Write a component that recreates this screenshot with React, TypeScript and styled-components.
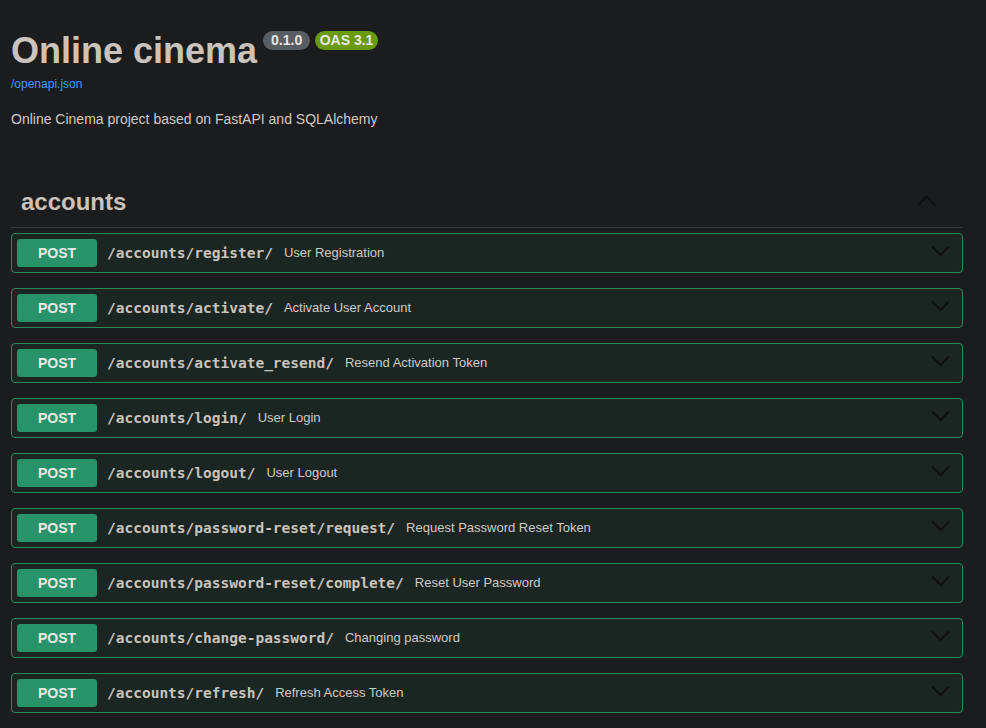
import React from 'react'
import styled, { createGlobalStyle } from 'styled-components'

const GlobalStyle = createGlobalStyle`
  html, body {
    margin: 0;
    padding: 0;
    background: #1b1c1e;
  }
  body {
    font-family: 'Liberation Sans', Arial, sans-serif;
    color: #cdc8c1;
  }
`

const Page = styled.div`
  padding: 30px 23px 0 11px;
`

const Info = styled.div`
  margin-bottom: 50px;
`

const TitleRow = styled.div`
  display: flex;
  align-items: flex-start;
`

const Title = styled.h2`
  margin: 0;
  font-size: 36px;
  line-height: 42px;
  font-weight: 700;
  color: #c9c3bb;
`

const Badges = styled.div`
  display: flex;
  gap: 5px;
  margin: 1px 0 0 6px;
`

const Badge = styled.span<{ $bg: string; $pad: number }>`
  display: inline-block;
  height: 19px;
  line-height: 19px;
  padding: 0 ${({ $pad }) => $pad}px;
  border-radius: 10px;
  background: ${({ $bg }) => $bg};
  color: #eae8e4;
  font-size: 14px;
  font-weight: 700;
`

const SpecLink = styled.a`
  display: block;
  margin-top: 5px;
  font-size: 12px;
  color: #3d9bff;
  text-decoration: none;
`

const Description = styled.p`
  margin: 20px 0 0;
  font-size: 14px;
  color: #cfcac3;
`

const TagHeader = styled.div`
  display: flex;
  align-items: center;
  justify-content: space-between;
  height: 30px;
  padding: 10px 26px 10px 10px;
  border-bottom: 1px solid #35383a;
  margin-bottom: 5px;
`

const TagName = styled.h3`
  margin: 0;
  font-size: 24px;
  font-weight: 700;
  color: #c9c3bb;
`

const OpBlock = styled.div`
  display: flex;
  align-items: center;
  padding: 5px;
  margin-bottom: 15px;
  border: 1px solid #2b8a5d;
  border-radius: 4px;
  background: #1b2623;
`

const Method = styled.span`
  width: 80px;
  height: 28px;
  line-height: 28px;
  flex-shrink: 0;
  text-align: center;
  border-radius: 3px;
  background: #28926a;
  color: #ebe9e5;
  font-size: 14px;
  font-weight: 700;
`

const Path = styled.span`
  padding: 0 11px 0 10px;
  font-family: 'DejaVu Sans Mono', 'Liberation Mono', monospace;
  font-size: 14.5px;
  font-weight: 700;
  color: #c8c3bc;
`

const Summary = styled.span`
  flex: 1;
  margin-top: -2px;
  font-size: 13px;
  color: #cfcac3;
`

const Arrow = styled.svg<{ $right: number }>`
  width: 20px;
  height: 20px;
  flex-shrink: 0;
  margin-right: ${({ $right }) => $right}px;
`

const ops = [
  ['/accounts/register/', 'User Registration'],
  ['/accounts/activate/', 'Activate User Account'],
  ['/accounts/activate_resend/', 'Resend Activation Token'],
  ['/accounts/login/', 'User Login'],
  ['/accounts/logout/', 'User Logout'],
  ['/accounts/password-reset/request/', 'Request Password Reset Token'],
  ['/accounts/password-reset/complete/', 'Reset User Password'],
  ['/accounts/change-password/', 'Changing password'],
  ['/accounts/refresh/', 'Refresh Access Token'],
]

export default function App() {
  return (
    <>
      <GlobalStyle />
      <Page>
        <Info>
          <TitleRow>
            <Title>Online cinema</Title>
            <Badges>
              <Badge $bg="#575d62" $pad={8}>0.1.0</Badge>
              <Badge $bg="#6a9a0e" $pad={4.5}>OAS 3.1</Badge>
            </Badges>
          </TitleRow>
          <SpecLink href="#">/openapi.json</SpecLink>
          <Description>Online Cinema project based on FastAPI and SQLAlchemy</Description>
        </Info>

        <TagHeader>
          <TagName>accounts</TagName>
          <Arrow viewBox="0 0 20 20" $right={0}>
            <polyline points="1,13 9.5,4.5 18,13" fill="none" stroke="#0e0f10" strokeWidth="2" />
          </Arrow>
        </TagHeader>

        {ops.map(([path, summary]) => (
          <OpBlock key={path}>
            <Method>POST</Method>
            <Path>{path}</Path>
            <Summary>{summary}</Summary>
            <Arrow viewBox="0 0 20 20" $right={7}>
              <polyline points="2,3.5 10.5,12 19,3.5" fill="none" stroke="#0e0f10" strokeWidth="2" />
            </Arrow>
          </OpBlock>
        ))}
      </Page>
    </>
  )
}
